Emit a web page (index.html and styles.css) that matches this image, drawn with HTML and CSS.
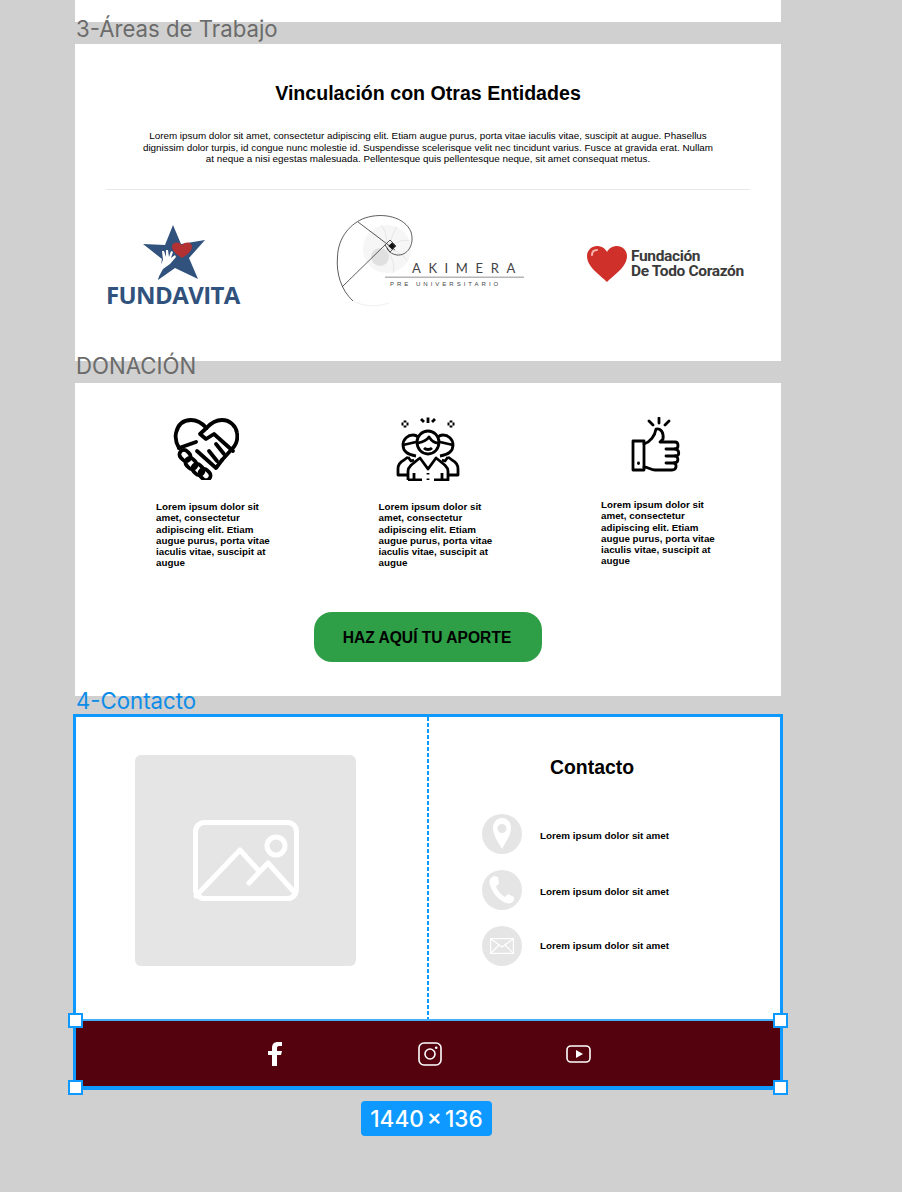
FILE: index.html
```html
<!DOCTYPE html>
<html lang="es">
	<head>
		<meta charset="UTF-8" />
		<meta name="viewport" content="width=device-width, initial-scale=1.0" />
		<title>Áreas de Trabajo</title>
		<link rel="stylesheet" href="styles.css">
	</head>
	<body>
		<div class="canvas">
			<div class="frame frame-top"></div>
			<p class="frame-label">3-Áreas de Trabajo</p>

			<section class="frame entities">
				<h2>Vinculación con Otras Entidades</h2>
				<p class="intro">
					Lorem ipsum dolor sit amet, consectetur adipiscing elit. Etiam augue purus, porta vitae iaculis vitae, suscipit at augue. Phasellus
					dignissim dolor turpis, id congue nunc molestie id. Suspendisse scelerisque velit nec tincidunt varius. Fusce at gravida erat. Nullam
					at neque a nisi egestas malesuada. Pellentesque quis pellentesque neque, sit amet consequat metus.
				</p>
				<hr class="rule" />
				<div class="logos">
					<div class="logo-fundavita">
						<svg width="64" height="56" viewBox="0 0 64 56">
							<path fill="#30527d" d="M31 0 L39 19 L63 15 L47 33 L56 54 L33 43 L16 55 L20 34 L1 19 L23 20 Z" />
							<path fill="#b23234" d="M40 33 C35 30 30 26 30 22 C30 17 36 16 40 20 C44 16 50 17 50 22 C50 26 45 30 40 33 Z" />
							<path fill="#fff" d="M12 54 L18 41 L21 35 L20 26 L22 26 L24 32 L24 25 L26 25 L27 32 L29 26 L31 27 L29 33 L33 30 L34 32 L28 39 L21 44 L15 55 Z" />
						</svg>
						<span>FUNDAVITA</span>
					</div>

					<svg class="logo-akimera" width="187" height="92" viewBox="0 0 187 92">
						<circle cx="50" cy="34" r="24" fill="#f6f6f6" />
						<g fill="none" stroke="#e6e6e6" stroke-width="1">
							<path d="M50 34 C46 24 38 18 32 16" />
							<path d="M50 34 C50 22 48 14 44 10" />
							<path d="M50 34 C55 22 58 14 60 12" />
							<path d="M50 34 C60 26 68 24 72 26" />
							<path d="M50 34 C62 36 68 42 70 46" />
							<path d="M50 34 C56 44 58 52 56 58" />
							<path d="M16 86 C28 92 40 92 52 88" stroke="#f0f0f0" />
						</g>
						<circle cx="43" cy="42" r="9" fill="#e0e0e0" />
						<g fill="none" stroke="#333" stroke-width="0.8">
							<path d="M16 86 C4 75 -1 58 0.500 42 C1 22 14 8 28 3 C46 -3 68 2 74 17 C78 30 70 41 60 40 C54 39 51 36 50 33" />
							<path d="M21 7 L58 35" />
							<path d="M5 72 L48 30" />
							<path d="M48 30 L53 25 L59 31 L53 37 Z" />
						</g>
						<rect x="52.500" y="28.500" width="5" height="5" fill="#111" transform="rotate(45 55 31)" />
						<text class="akimera-name" x="75" y="58">AKIMERA</text>
						<rect x="48" y="61.500" width="139" height="1.500" fill="#b5b5b5" />
						<text class="akimera-sub" x="53" y="71">PRE UNIVERSITARIO</text>
					</svg>

					<div class="logo-corazon">
						<svg width="40" height="36" viewBox="0 0 40 36">
							<path fill="#d0302a" d="M20 36 C13 29 0 21 0 10 C0 4 5 0 10 0 C14 0 18 2 20 6 C22 2 26 0 30 0 C35 0 40 4 40 10 C40 21 27 29 20 36 Z" />
							<path fill="none" stroke="#f3b6b0" stroke-width="2" stroke-linecap="round" d="M5 9 C5 6 7 4 10 4" />
						</svg>
						<div class="corazon-name">Fundación<br />De Todo Corazón</div>
					</div>
				</div>
			</section>

			<p class="frame-label label-low">DONACIÓN</p>

			<section class="frame donation">
				<div class="reasons">
					<div class="reason">
						<svg class="icon-heart" width="66" height="62" viewBox="0 0 66 62">
							<g fill="none" stroke="#000" stroke-width="3.800" stroke-linecap="round" stroke-linejoin="round">
								<path d="M6 30 C3 25 2 20 3 15 C5 6 11 2 18 2 C24 2 29 5 33.500 10 C38 5 43 2 49 2 C57 2 63 8 64 15 C65 21 63 27 59 31 L49 42" />
								<path d="M33.500 10 L27 16 L33 21 L41 16 L60 33" />
								<path d="M6 30 L23 24" />
								<path d="M36 33 L44 43 M43 26 L51 36" />
								<path d="M24 33 L43 50 L49 42" />
								<rect x="6" y="33" width="12" height="9" rx="4.500" transform="rotate(45 12 37.500)" />
								<rect x="12" y="41" width="12" height="9" rx="4.500" transform="rotate(45 18 45.500)" />
								<rect x="19" y="47" width="12" height="9" rx="4.500" transform="rotate(45 25 51.500)" />
								<rect x="26" y="52" width="12" height="9" rx="4.500" transform="rotate(45 32 56.500)" />
							</g>
						</svg>
						<p>Lorem ipsum dolor sit amet, consectetur adipiscing elit. Etiam augue purus, porta vitae iaculis vitae, suscipit at augue</p>
					</div>
					<div class="reason">
						<svg class="icon-team" width="66" height="64" viewBox="0 0 64 64">
							<g fill="none" stroke="#000" stroke-width="2.800" stroke-linejoin="round">
								<path d="M32 0.500 L32 6 M25 2 L28 5 M39 2 L36 5" />
								<path d="M9 3.500 L9 5.500 M9 8.500 L9 10.500 M5.500 7 L7.500 7 M10.500 7 L12.500 7" />
								<path d="M55 3.500 L55 5.500 M55 8.500 L55 10.500 M51.500 7 L53.500 7 M56.500 7 L58.500 7" />
								<path d="M20 39 C13 38 7 35 7 28 C7 22 12 18 17 18 C19 18 21 19 22 20" />
								<path d="M44 39 C51 38 57 35 57 28 C57 22 52 18 47 18 C45 18 43 19 42 20" />
								<path d="M7 28 L20 25 M57 28 L44 25" />
								<path d="M21 25 C21 19 26 14 32 14 C38 14 43 19 43 25 C43 32 38 37 32 37 C26 37 21 32 21 25 Z" />
								<path d="M22 26 C27 25 31 23 33 20 C35 23 38 26 42 26" />
								<path d="M28 31 C30 33 34 33 36 31" />
								<path d="M12 40 L15 44 L18 43 M12 40 L8 43 C4 45 2 48 2 52 L2 58 L12 58" />
								<path d="M52 40 L49 44 L46 43 M52 40 L56 43 C60 45 62 48 62 52 L62 58 L52 58" />
								<path d="M12 63 L12 54 C12 50 16 47 24 41 L32 52 L40 41 C48 47 52 50 52 54 L52 63 L38 63 M26 63 L12 63" />
								<path d="M18 56 L18 63 M46 56 L46 63" />
								<path d="M32 56 L32 57.500 M32 61.500 L32 63" />
							</g>
						</svg>
						<p>Lorem ipsum dolor sit amet, consectetur adipiscing elit. Etiam augue purus, porta vitae iaculis vitae, suscipit at augue</p>
					</div>
					<div class="reason reason-raised">
						<svg class="icon-thumb" width="50" height="56" viewBox="0 0 50 56">
							<g fill="none" stroke="#000" stroke-width="2.800" stroke-linecap="round" stroke-linejoin="round">
								<path d="M28 1 L28 6 M18 4 L22 8 M38 4 L34 8" />
								<path d="M2 24 L13 24 L13 53 L2 53 Z" />
								<path d="M13 27 C19 25 24 19 25 12 C30 11 33 16 32 22 L29 25 L44 25 C48 25 48 32 44 32 C49 33 49 39 44 39 C48 40 48 46 43 46 C46 47 46 53 41 53 L24 53 C20 53 17 50 13 50" />
								<path d="M35 32 L44 32 M35 39 L44 39 M35 46 L43 46" />
								<path d="M7.500 46 L7.500 46.500" />
							</g>
						</svg>
						<p>Lorem ipsum dolor sit amet, consectetur adipiscing elit. Etiam augue purus, porta vitae iaculis vitae, suscipit at augue</p>
					</div>
				</div>
				<a class="cta" href="#">HAZ AQUÍ TU APORTE</a>
			</section>

			<p class="frame-label label-selected">4-Contacto</p>

			<div class="selection">
				<section class="contact">
					<div class="contact-media">
						<div class="placeholder">
							<svg width="106" height="82" viewBox="0 0 106 82">
								<g fill="none" stroke="#fff" stroke-width="5" stroke-linecap="round" stroke-linejoin="round">
									<rect x="2.500" y="2.500" width="101" height="76" rx="9" />
									<circle cx="83" cy="26" r="9" />
									<path d="M3 76 L47 30 L66 51" />
									<path d="M56 63 L75 43 L102 73" />
								</g>
							</svg>
						</div>
					</div>
					<div class="contact-info">
						<h3>Contacto</h3>
						<div class="contact-row">
							<span class="round-icon">
								<svg width="18" height="32" viewBox="0 0 18 32">
									<path fill="#fff" fill-rule="evenodd" d="M9 31 C6 25 0 18 0 10 C0 4 4 0 9 0 C14 0 18 4 18 10 C18 18 12 25 9 31 Z M9 6 A4.500 4.500 0 1 0 9 15 A4.500 4.500 0 1 0 9 6 Z" />
								</svg>
							</span>
							<p>Lorem ipsum dolor sit amet</p>
						</div>
						<div class="contact-row">
							<span class="round-icon">
								<svg width="26" height="28" viewBox="0 0 26 28">
									<path fill="#fff" d="M5 0 L9 1 L10 8 L7 10 C8 14 12 19 16 21 L19 18 L25 21 L25 24 C24 27 20 28 17 27 C9 24 2 15 0.500 7 C0 4 2 1 5 0 Z" />
								</svg>
							</span>
							<p>Lorem ipsum dolor sit amet</p>
						</div>
						<div class="contact-row contact-row-mail">
							<span class="round-icon">
								<svg width="24" height="16" viewBox="0 0 24 16">
									<g fill="none" stroke="#fff" stroke-width="1.200">
										<rect x="0.600" y="0.600" width="22.800" height="14.800" />
										<path d="M1 1 L12 9 L23 1 M1 15 L9 7 M23 15 L15 7" />
									</g>
								</svg>
							</span>
							<p>Lorem ipsum dolor sit amet</p>
						</div>
					</div>
				</section>
				<footer class="social">
					<svg class="social-f" width="14" height="24" viewBox="0 0 14 24">
						<path fill="#fff" d="M4 24 L4 13 L0 13 L0 9 L4 9 L4 6 C4 2 6 0 10 0 L14 0 L14 4 L11 4 C9.500 4 9 5 9 6 L9 9 L14 9 L13 13 L9 13 L9 24 Z" />
					</svg>
					<svg class="social-ig" width="24" height="24" viewBox="0 0 24 24">
						<g fill="none" stroke="#fff" stroke-width="1.600">
							<rect x="1" y="1" width="22" height="22" rx="5" />
							<circle cx="12" cy="12" r="5" />
						</g>
						<circle cx="18.200" cy="5.800" r="1.300" fill="#fff" />
					</svg>
					<svg class="social-yt" width="25" height="18" viewBox="0 0 25 18">
						<rect x="1" y="1" width="23" height="16" rx="4" fill="none" stroke="#fff" stroke-width="1.600" />
						<path fill="#fff" d="M10 5 L17 9 L10 13 Z" />
					</svg>
				</footer>
				<span class="handle handle-tl"></span>
				<span class="handle handle-tr"></span>
				<span class="handle handle-bl"></span>
				<span class="handle handle-br"></span>
			</div>

			<div class="size-tag">1440 × 136</div>
		</div>
	</body>
</html>
```
FILE: styles.css
```css
* {
	margin: 0;
	padding: 0;
	box-sizing: border-box;
}
html,
body {
	height: 1192px;
	overflow: hidden;
}
body {
	font-family: "Liberation Sans", Arial, sans-serif;
	background-color: #d0d0d0;
	color: #000;
}
.canvas {
	width: 706px;
	margin-left: 75px;
}
.frame {
	background-color: #fff;
}
.frame-top {
	height: 22px;
}
.frame-label {
	position: relative;
	height: 22px;
	padding-left: 1px;
	font-family: Inter, sans-serif;
	font-size: 22.2px;
	line-height: 14px;
	color: #6b6b6b;
	white-space: nowrap;
}
.label-low {
	line-height: 10px;
}
.label-selected {
	height: 18px;
	line-height: 10px;
	color: #0c8ce9;
}

/* Vinculacion */
.entities {
	height: 317px;
	padding-top: 37px;
}
.entities h2 {
	font-size: 19.6px;
	line-height: 24px;
	font-weight: bold;
	text-align: center;
}
.intro {
	width: 572px;
	margin: 25px auto 0;
	font-size: 9.85px;
	line-height: 11.5px;
	text-align: center;
}
.rule {
	margin: 24px 31px 0;
	border: 0;
	border-top: 1px solid #e8e8e8;
}
.logos {
	display: flex;
	align-items: flex-start;
	margin-top: 25px;
	padding: 0 37px 0 31px;
}
.logo-fundavita {
	display: flex;
	flex-direction: column;
	width: 134px;
	padding-top: 10px;
}
.logo-fundavita svg {
	margin-left: 36px;
}
.logo-fundavita span {
	margin-top: 1px;
	font-family: "Open Sans", sans-serif;
	font-size: 24px;
	line-height: 26px;
	font-weight: 700;
	letter-spacing: -0.6px;
	white-space: nowrap;
	color: #30527d;
}
.logo-akimera {
	margin-left: 97px;
	overflow: visible;
}
.akimera-name {
	font-family: Lato, sans-serif;
	font-size: 13px;
	letter-spacing: 7.6px;
	fill: #444;
}
.akimera-sub {
	font-family: "Liberation Sans", sans-serif;
	font-size: 6px;
	letter-spacing: 3px;
	fill: #444;
}
.logo-corazon {
	display: flex;
	align-items: center;
	gap: 4px;
	margin-left: 63px;
	padding-top: 31px;
}
.corazon-name {
	font-family: Roboto, sans-serif;
	font-size: 15.5px;
	line-height: 15px;
	font-weight: 700;
	letter-spacing: -0.35px;
	white-space: nowrap;
	color: #3a3a3a;
}

/* Donacion */
.donation {
	height: 313px;
	padding-top: 34px;
}
.reasons {
	display: grid;
	grid-template-columns: repeat(3, 116px);
	column-gap: 106.5px;
	padding-left: 81px;
}
.reason svg {
	display: block;
}
.reason p {
	margin-top: 22px;
	font-size: 9.8px;
	line-height: 11.3px;
	font-weight: bold;
}
.reason-raised p {
	margin-top: 26px;
}
.icon-heart {
	margin: 1px 0 -1px 17px;
}
.icon-team {
	margin: 0 0 -2px 16px;
}
.icon-thumb {
	margin-left: 30px;
}
.cta {
	display: block;
	width: 228px;
	height: 50px;
	margin: 43px auto 0;
	padding-right: 2px;
	border-radius: 18px;
	background-color: #2e9e47;
	color: #000;
	font-size: 15.6px;
	line-height: 51px;
	font-weight: bold;
	text-align: center;
	text-decoration: none;
}

/* Contacto */
.selection {
	position: relative;
	width: 710px;
	margin-left: -2px;
	border: 3px solid #0d99ff;
	border-bottom-width: 4px;
}
.contact {
	display: flex;
	height: 304px;
	background-color: #fff;
	border-bottom: 2px solid #45aef9;
}
.contact-media {
	width: 353px;
	padding: 38px 0 0 59px;
	background-image: repeating-linear-gradient(to bottom, #0d99ff 0 4px, transparent 4px 6px);
	background-size: 2px 100%;
	background-position: right top;
	background-repeat: no-repeat;
}
.placeholder {
	display: flex;
	justify-content: center;
	align-items: center;
	width: 221px;
	height: 211px;
	border-radius: 6px;
	background-color: #e5e5e5;
}
.contact-info {
	flex: 1;
	padding: 39px 0 0 53px;
}
.contact-info h3 {
	width: 220px;
	font-size: 19.4px;
	line-height: 22px;
	font-weight: bold;
	text-align: center;
}
.contact-row {
	display: flex;
	align-items: center;
	gap: 18px;
	margin-top: 16px;
}
.contact-info h3 + .contact-row {
	margin-top: 36px;
}
.contact-row p {
	padding-top: 2px;
	font-size: 9.85px;
	font-weight: bold;
}
.contact-row-mail p {
	padding: 0 0 2px;
}
.round-icon {
	display: flex;
	justify-content: center;
	align-items: center;
	width: 40px;
	height: 40px;
	border-radius: 50%;
	background-color: #e5e5e5;
}
.social {
	display: flex;
	align-items: center;
	height: 65px;
	padding-left: 192px;
	background-color: #54020d;
}
.social-ig {
	margin-left: 136px;
}
.social-yt {
	margin-left: 124px;
}
.handle {
	position: absolute;
	width: 15px;
	height: 15px;
	background-color: #fff;
	border: 2px solid #0d99ff;
}
.handle-tl {
	left: -8px;
	bottom: 58px;
}
.handle-tr {
	right: -8px;
	bottom: 58px;
}
.handle-bl {
	left: -8px;
	bottom: -9px;
}
.handle-br {
	right: -8px;
	bottom: -9px;
}
.size-tag {
	width: 131px;
	height: 35px;
	margin: 11px 0 0 286px;
	border-radius: 4px;
	background-color: #0d99ff;
	color: #fff;
	font-family: Inter, sans-serif;
	font-size: 22.6px;
	font-weight: 500;
	line-height: 35px;
	word-spacing: -3px;
	text-align: center;
	white-space: nowrap;
}
```
